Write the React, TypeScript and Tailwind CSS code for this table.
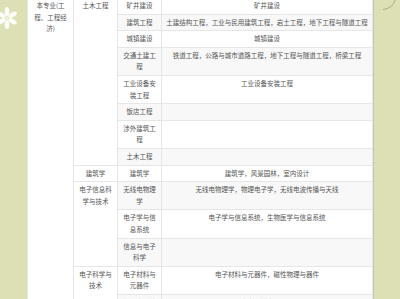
const rows = [
  { sub: ['矿井建设'], dir: '矿井建设' },
  { sub: ['建筑工程'], dir: '土建结构工程，工业与民用建筑工程，岩土工程，地下工程与隧道工程' },
  { sub: ['城镇建设'], dir: '城镇建设' },
  { sub: ['交通土建工', '程'], dir: '铁道工程，公路与城市道路工程，地下工程与隧道工程，桥梁工程' },
  { sub: ['工业设备安', '装工程'], dir: '工业设备安装工程' },
  { sub: ['饭店工程'], dir: '' },
  { sub: ['涉外建筑工', '程'], dir: '' },
  { sub: ['土木工程'], dir: '' },
  { sub: ['建筑学'], dir: '建筑学，风景园林，室内设计' },
  { sub: ['无线电物理', '学'], dir: '无线电物理学，物理电子学，无线电波传播与天线' },
  { sub: ['电子学与信', '息系统'], dir: '电子学与信息系统，生物医学与信息系统' },
  { sub: ['信息与电子', '科学'], dir: '' },
  { sub: ['电子材料与', '元器件'], dir: '电子材料与元器件，磁性物理与器件' },
  { sub: ['物理电子技', '术'], dir: '光电子技术与器件' },
]

// majors in column two, keyed by the row where they start
const majors: Record<number, { lines: string[]; span: number }> = {
  0: { lines: ['土木工程'], span: 8 },
  8: { lines: ['建筑学'], span: 1 },
  9: { lines: ['电子信息科', '学与技术'], span: 3 },
  12: { lines: ['电子科学与', '技术'], span: 2 },
}

const td = 'border border-[#e6e6e6] px-1 py-[2px] align-top text-center whitespace-nowrap'

function Lines({ lines }: { lines: string[] }) {
  return (
    <>
      {lines.map((l, i) => (
        <div key={i}>{l}</div>
      ))}
    </>
  )
}

function Flower() {
  return (
    <svg width="27" height="40" viewBox="0 0 27 40">
      {[0, 60, 120, 180, 240, 300].map(a => (
        <ellipse key={a} cx="7" cy="11.5" rx="2.3" ry="4.6" fill="#ffffff" opacity="0.9" transform={`rotate(${a} 7 18)`} />
      ))}
      <circle cx="7" cy="18" r="1.8" fill="#eef0d4" />
    </svg>
  )
}

export default function App() {
  return (
    <main
      className="flex h-[299px] w-[400px] overflow-hidden bg-[#dde0b4] text-[6.5px] leading-[11.6px] text-[#555]"
      style={{ fontFamily: '"Noto Sans CJK SC", "Noto Sans", sans-serif' }}
    >
      <div className="w-[27px] shrink-0">
        <Flower />
      </div>

      <div className="w-[347px] shrink-0 border-r border-[#c4c4c4] bg-white">
        <table className="-mt-[3px] w-full table-fixed border-collapse">
          <colgroup>
            <col className="w-[46px]" />
            <col className="w-[44px]" />
            <col className="w-[44px]" />
            <col />
          </colgroup>
          <tbody>
            {rows.map((r, i) => {
              const stripe = i % 2 === 1 ? 'bg-[#f8f8f8]' : ''
              const m = majors[i]
              return (
                <tr key={i}>
                  {i === 0 && (
                    <td rowSpan={rows.length} className={td}>
                      <Lines lines={['本专业(工', '程、工程经', '济)']} />
                    </td>
                  )}
                  {m && (
                    <td rowSpan={m.span} className={td}>
                      <Lines lines={m.lines} />
                    </td>
                  )}
                  <td className={`${td} ${stripe}`}>
                    <Lines lines={r.sub} />
                  </td>
                  <td className={`${td} ${stripe}`}>{r.dir}</td>
                </tr>
              )
            })}
          </tbody>
        </table>
      </div>

      <div className="flex-1">
        <svg width="26" height="14" viewBox="0 0 26 14">
          <path d="M21 0 Q19.5 8 9 9.5" stroke="#9fa176" strokeWidth="0.8" fill="none" />
        </svg>
      </div>
    </main>
  )
}
